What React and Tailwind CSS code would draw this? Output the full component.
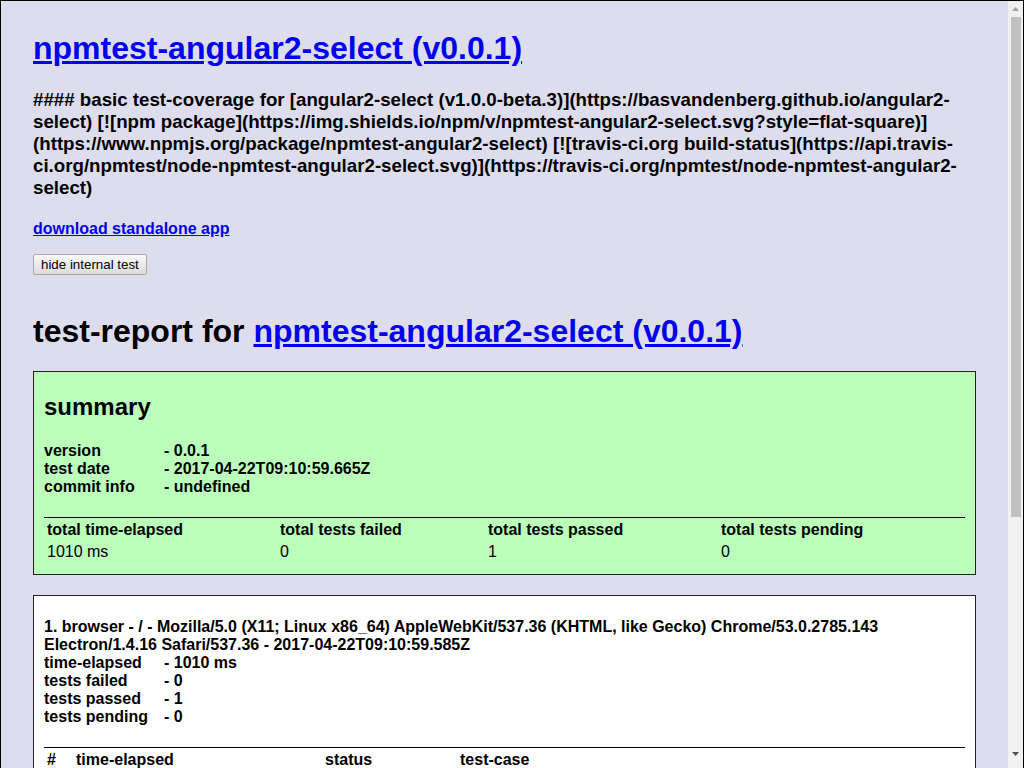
export default function App() {
  const font = { fontFamily: '"Liberation Sans", Arial, sans-serif' };
  return (
    <div className="w-[1024px] h-[768px] overflow-hidden flex border-l border-t border-r border-black bg-[#ddddee] text-black" style={font}>
      <div className="w-[1007px] shrink-0 overflow-hidden px-[32px] pt-[29px]">
        <h1 className="text-[32px] leading-[37px] font-bold">
          <a href="#" className="text-[#0000ee] underline">npmtest-angular2-select (v0.0.1)</a>
        </h1>
        <h3 className="mt-[22px] text-[18.72px] leading-[22px] font-bold whitespace-nowrap">
          #### basic test-coverage for [angular2-select (v1.0.0-beta.3)](https://basvandenberg.github.io/angular2-<br />
          select) [![npm package](https://img.shields.io/npm/v/npmtest-angular2-select.svg?style=flat-square)]<br />
          (https://www.npmjs.org/package/npmtest-angular2-select) [![travis-ci.org build-status](https://api.travis-<br />
          ci.org/npmtest/node-npmtest-angular2-select.svg)](https://travis-ci.org/npmtest/node-npmtest-angular2-<br />
          select)
        </h3>
        <div className="mt-[21px] text-[16px] leading-[18px] font-bold">
          <a href="#" className="text-[#0000ee] underline">download standalone app</a>
        </div>
        <div className="mt-[16px] flex">
          <button className="h-[21px] px-[7px] text-[13.33px] leading-[15px] rounded-[2px] border border-[#a9a9a9] bg-gradient-to-b from-[#fafafa] to-[#dcdcdc] text-black">
            hide internal test
          </button>
        </div>
        <h1 className="mt-[38px] text-[32px] leading-[37px] font-bold">
          test-report for <a href="#" className="text-[#0000ee] underline">npmtest-angular2-select (v0.0.1)</a>
        </h1>

        <div className="mt-[21px] border border-[#222] bg-[#bbffbb] px-[10px] pt-[11px] pb-[11px]">
          <h2 className="mt-[10px] text-[24px] leading-[28px] font-bold">summary</h2>
          <div className="mt-[21px] text-[16px] leading-[18px] font-bold">
            <div className="flex"><span className="w-[120px]">version</span><span>- 0.0.1</span></div>
            <div className="flex"><span className="w-[120px]">test date</span><span>- 2017-04-22T09:10:59.665Z</span></div>
            <div className="flex"><span className="w-[120px]">commit info</span><span>- undefined</span></div>
          </div>
          <div className="mt-[21px] border-t border-black text-[16px] leading-[18px]">
            <div className="grid grid-cols-[233px_208px_233px_1fr] pt-[3px] pb-[2px] font-bold">
              <div className="pl-[3px]">total time-elapsed</div>
              <div className="pl-[3px]">total tests failed</div>
              <div className="pl-[3px]">total tests passed</div>
              <div className="pl-[3px]">total tests pending</div>
            </div>
            <div className="grid grid-cols-[233px_208px_233px_1fr] py-[2px]">
              <div className="pl-[3px]">1010 ms</div>
              <div className="pl-[3px]">0</div>
              <div className="pl-[3px]">1</div>
              <div className="pl-[3px]">0</div>
            </div>
          </div>
        </div>

        <div className="mt-[20px] border border-[#222] bg-white px-[10px] pt-[22px] pb-[11px]">
          <div className="text-[16px] leading-[18px] font-bold whitespace-nowrap">
            <div>1. browser - / - Mozilla/5.0 (X11; Linux x86_64) AppleWebKit/537.36 (KHTML, like Gecko) Chrome/53.0.2785.143</div>
            <div>Electron/1.4.16 Safari/537.36 - 2017-04-22T09:10:59.585Z</div>
            <div className="flex"><span className="w-[120px]">time-elapsed</span><span>- 1010 ms</span></div>
            <div className="flex"><span className="w-[120px]">tests failed</span><span>- 0</span></div>
            <div className="flex"><span className="w-[120px]">tests passed</span><span>- 1</span></div>
            <div className="flex"><span className="w-[120px]">tests pending</span><span>- 0</span></div>
          </div>
          <div className="mt-[21px] border-t border-black text-[16px] leading-[18px]">
            <div className="grid grid-cols-[29px_249px_135px_1fr] pt-[3px] pb-[2px] font-bold">
              <div className="pl-[3px]">#</div>
              <div className="pl-[3px]">time-elapsed</div>
              <div className="pl-[3px]">status</div>
              <div className="pl-[3px]">test-case</div>
            </div>
            <div className="grid grid-cols-[29px_249px_135px_1fr] py-[2px]">
              <div className="pl-[3px]">1</div>
              <div className="pl-[3px]">1010 ms</div>
              <div className="pl-[3px]">passed</div>
              <div className="pl-[3px]">testCase_undefined_default</div>
            </div>
          </div>
        </div>
      </div>

      <div className="w-[15px] shrink-0 bg-[#f1f1f1] flex flex-col items-center">
        <div className="h-[16px] w-full flex items-center justify-center">
          <svg width="7" height="4" viewBox="0 0 7 4"><path d="M0 4 L3.5 0 L7 4 Z" fill="#a3a3a3" /></svg>
        </div>
        <div className="w-[10px] h-[500px] bg-[#c1c1c1]" />
        <div className="flex-1" />
        <div className="h-[21px] w-full flex items-start justify-center pt-[5px]">
          <svg width="7" height="4" viewBox="0 0 7 4"><path d="M0 0 L7 0 L3.5 4 Z" fill="#505050" /></svg>
        </div>
      </div>
    </div>
  );
}
